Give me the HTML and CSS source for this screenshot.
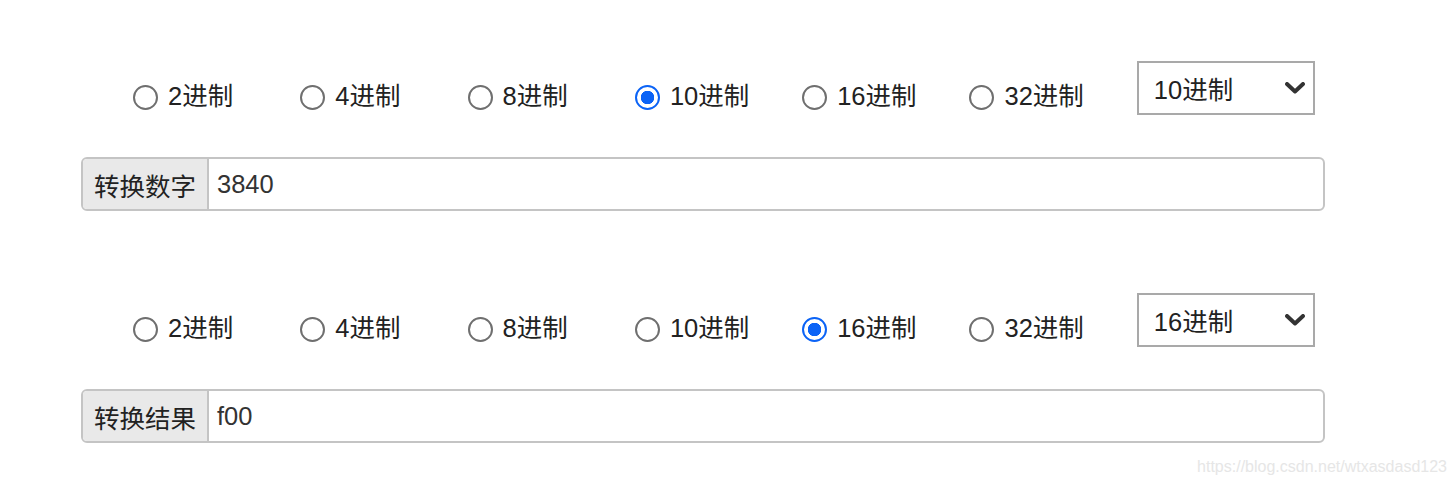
FILE: index.html
```html
<!DOCTYPE html>
<html lang="zh">
<head>
<meta charset="utf-8">
<title>进制转换</title>
<link rel="stylesheet" href="styles.css">
</head>
<body>
<main class="page">
  <section class="block">
    <div class="radio-row">
      <label class="opt"><input type="radio" name="from"><span>2进制</span></label>
      <label class="opt"><input type="radio" name="from"><span>4进制</span></label>
      <label class="opt"><input type="radio" name="from"><span>8进制</span></label>
      <label class="opt"><input type="radio" name="from" checked><span>10进制</span></label>
      <label class="opt"><input type="radio" name="from"><span>16进制</span></label>
      <label class="opt"><input type="radio" name="from"><span>32进制</span></label>
      <div class="select">
        <span class="select-text">10进制</span>
        <svg class="chev" width="20" height="12" viewBox="0 0 20 12"><path d="M2 2 L10 9.5 L18 2" fill="none" stroke="#333" stroke-width="4" stroke-linecap="round" stroke-linejoin="round"/></svg>
      </div>
    </div>
    <div class="input-group">
      <span class="addon">转换数字</span>
      <span class="field">3840</span>
    </div>
  </section>
  <section class="block second">
    <div class="radio-row">
      <label class="opt"><input type="radio" name="to"><span>2进制</span></label>
      <label class="opt"><input type="radio" name="to"><span>4进制</span></label>
      <label class="opt"><input type="radio" name="to"><span>8进制</span></label>
      <label class="opt"><input type="radio" name="to"><span>10进制</span></label>
      <label class="opt"><input type="radio" name="to" checked><span>16进制</span></label>
      <label class="opt"><input type="radio" name="to"><span>32进制</span></label>
      <div class="select">
        <span class="select-text">16进制</span>
        <svg class="chev" width="20" height="12" viewBox="0 0 20 12"><path d="M2 2 L10 9.5 L18 2" fill="none" stroke="#333" stroke-width="4" stroke-linecap="round" stroke-linejoin="round"/></svg>
      </div>
    </div>
    <div class="input-group">
      <span class="addon">转换结果</span>
      <span class="field">f00</span>
    </div>
  </section>
</main>
<div class="watermark">https://blog.csdn.net/wtxasdasd123</div>
</body>
</html>
```

FILE: styles.css
```css
html, body {
  margin: 0;
  padding: 0;
  background: #fff;
}
body {
  font-family: "Liberation Sans", "Noto Sans CJK SC", sans-serif;
  color: #222;
  width: 1456px;
  height: 486px;
  overflow: hidden;
  position: relative;
}
.page {
  padding: 61px 0 0 81px;
  width: 1244px;
}
.block.second {
  margin-top: 82px;
}
.radio-row {
  display: flex;
  align-items: flex-start;
  padding-left: 52px;
  height: 54px;
}
.opt {
  width: 167.3px;
  flex: none;
  display: flex;
  align-items: center;
  gap: 10px;
  margin-top: 17px;
  font-size: 25.5px;
  line-height: 36px;
  color: #222;
}
.opt input {
  -webkit-appearance: none;
  appearance: none;
  margin: 0;
  width: 25px;
  height: 25px;
  border: 2px solid #6f6f6f;
  border-radius: 50%;
  box-sizing: border-box;
  background: #fff;
  flex: none;
  position: relative;
  top: 1px;
}
.opt input:checked {
  border: 2.5px solid #0b63f6;
  background: radial-gradient(circle, #0b63f6 0 6.5px, #fff 7px);
}
.select {
  width: 178px;
  height: 54px;
  flex: none;
  box-sizing: border-box;
  border: 2px solid #a9a9a9;
  display: flex;
  align-items: center;
  justify-content: space-between;
  padding: 0 8px 0 15px;
  font-size: 25.5px;
  color: #222;
}
.select-text {
  position: relative;
  top: -1px;
}
.chev {
  flex: none;
}
.input-group {
  margin-top: 42px;
  display: flex;
  height: 54px;
  box-sizing: border-box;
  border: 2px solid #c4c4c4;
  border-radius: 6px;
  overflow: hidden;
  font-size: 25.5px;
}
.addon {
  width: 124px;
  flex: none;
  background: #e9e9e9;
  border-right: 2px solid #c4c4c4;
  display: flex;
  align-items: center;
  justify-content: center;
  color: #222;
}
.field {
  flex: 1;
  display: flex;
  align-items: center;
  padding-left: 8px;
  color: #333;
}
.watermark {
  position: absolute;
  right: 9px;
  top: 456px;
  font-size: 16px;
  line-height: 22px;
  color: #e6e6e6;
}
```
